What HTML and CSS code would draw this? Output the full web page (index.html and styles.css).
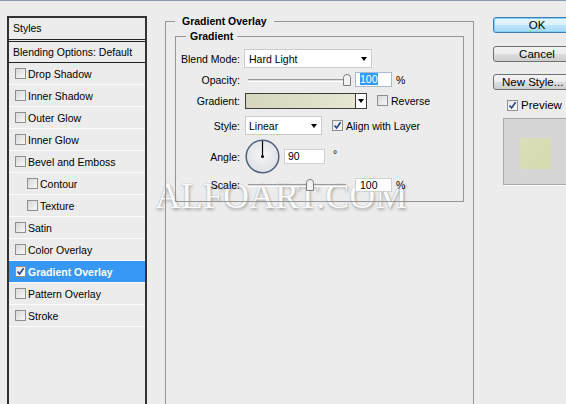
FILE: index.html
```html
<!DOCTYPE html>
<html lang="en">
<head>
<meta charset="utf-8">
<title>Layer Style - Gradient Overlay</title>
<link rel="stylesheet" href="styles.css">
</head>
<body>
<div class="dialog">
  <aside class="styles-panel">
    <div class="panel-head">Styles</div>
    <div class="panel-blend">Blending Options: Default</div>
    <ul class="fx-list">
      <li class="fx"><span class="cb"></span>Drop Shadow</li>
      <li class="fx"><span class="cb"></span>Inner Shadow</li>
      <li class="fx"><span class="cb"></span>Outer Glow</li>
      <li class="fx"><span class="cb"></span>Inner Glow</li>
      <li class="fx"><span class="cb"></span>Bevel and Emboss</li>
      <li class="fx sub"><span class="cb"></span>Contour</li>
      <li class="fx sub"><span class="cb"></span>Texture</li>
      <li class="fx"><span class="cb"></span>Satin</li>
      <li class="fx"><span class="cb"></span>Color Overlay</li>
      <li class="fx active"><span class="cb checked"><svg viewBox="0 0 9 9" width="9" height="9"><path d="M1.5 4.5 L3.6 7 L7.6 1.2" fill="none" stroke="#24428c" stroke-width="1.6"/></svg></span>Gradient Overlay</li>
      <li class="fx"><span class="cb"></span>Pattern Overlay</li>
      <li class="fx"><span class="cb"></span>Stroke</li>
    </ul>
  </aside>

  <main class="settings">
    <fieldset class="group outer">
      <legend>Gradient Overlay</legend>
      <fieldset class="group inner">
        <legend>Gradient</legend>
        <div class="row r-blend">
          <span class="lbl">Blend Mode:</span>
          <div class="select sel-blend"><span>Hard Light</span><i class="arrow"></i></div>
        </div>
        <div class="row r-opacity">
          <span class="lbl">Opacity:</span>
          <div class="slider"><span class="track"></span><svg class="thumb" style="left:95px" viewBox="0 0 8 12" width="8" height="12"><path d="M0.5 11.5 V3.5 Q0.5 0.5 4 0.5 Q7.5 0.5 7.5 3.5 V11.5 Z" fill="#f2f2f2" stroke="#7d7d7d"/></svg></div>
          <span class="num"><span class="hl">100</span></span>
          <span class="pct">%</span>
        </div>
        <div class="row r-gradient">
          <span class="lbl">Gradient:</span>
          <div class="grad"><span class="grad-fill"></span><span class="grad-btn"><i class="arrow"></i></span></div>
          <span class="check"><span class="cb"></span>Reverse</span>
        </div>
        <div class="row r-style">
          <span class="lbl">Style:</span>
          <div class="select sel-style"><span>Linear</span><i class="arrow"></i></div>
          <span class="check"><span class="cb checked"><svg viewBox="0 0 9 9" width="9" height="9"><path d="M1.5 4.5 L3.6 7 L7.6 1.2" fill="none" stroke="#24428c" stroke-width="1.6"/></svg></span>Align with Layer</span>
        </div>
        <div class="row r-angle">
          <span class="lbl">Angle:</span>
          <svg class="dial" viewBox="0 0 35 35" width="35" height="35">
            <defs>
              <radialGradient id="dialfill" cx="50%" cy="45%" r="55%">
                <stop offset="0" stop-color="#f6f6f6"/>
                <stop offset="1" stop-color="#dfe1e6"/>
              </radialGradient>
            </defs>
            <circle cx="17.5" cy="17.5" r="16.3" fill="url(#dialfill)" stroke="#4f5f7e" stroke-width="1.5"/>
            <line x1="17.5" y1="17.5" x2="17.5" y2="2" stroke="#000" stroke-width="1.2"/>
            <circle cx="17.5" cy="17.5" r="1.5" fill="#000"/>
          </svg>
          <span class="num num-angle">90</span>
          <span class="deg">°</span>
        </div>
        <div class="row r-scale">
          <span class="lbl">Scale:</span>
          <div class="slider"><span class="track"></span><svg class="thumb" style="left:58px" viewBox="0 0 8 12" width="8" height="12"><path d="M0.5 11.5 V3.5 Q0.5 0.5 4 0.5 Q7.5 0.5 7.5 3.5 V11.5 Z" fill="#f2f2f2" stroke="#7d7d7d"/></svg></div>
          <span class="num num-scale">100</span>
          <span class="pct">%</span>
        </div>
      </fieldset>
    </fieldset>
  </main>

  <aside class="actions">
    <button class="btn default">OK</button>
    <button class="btn cancel">Cancel</button>
    <button class="btn newstyle">New Style...</button>
    <span class="check preview-check"><span class="cb checked"><svg viewBox="0 0 9 9" width="9" height="9"><path d="M1.5 4.5 L3.6 7 L7.6 1.2" fill="none" stroke="#24428c" stroke-width="1.6"/></svg></span>Preview</span>
    <div class="preview-box"><span class="swatch"></span></div>
  </aside>
</div>
<div class="watermark">ALFOART.COM</div>
</body>
</html>
```

FILE: styles.css
```css
* { box-sizing: border-box; }
html, body { margin: 0; padding: 0; }
body {
  width: 566px;
  height: 404px;
  overflow: hidden;
  position: relative;
  background: #ececec;
  font-family: "Liberation Sans", Arial, sans-serif;
  font-size: 10.5px;
  color: #000;
}
.dialog {
  display: flex;
  align-items: flex-start;
  height: 404px;
  border-top: 1px solid #8b9ab3;
}

/* left styles list */
.styles-panel {
  flex: none;
  width: 140px;
  height: 400px;
  margin: 15px 0 0 7px;
  border: 2px solid #333;
}
.panel-head {
  height: 24px;
  line-height: 21px;
  padding-left: 4px;
  border-bottom: 3px double #222;
}
.panel-blend {
  height: 21px;
  line-height: 20px;
  padding-left: 4px;
  border-bottom: 1px solid #222;
}
.fx-list { list-style: none; margin: 0; padding: 0; }
.fx {
  display: flex;
  align-items: center;
  height: 22px;
  padding-left: 6px;
  border-bottom: 1px solid #fbfbfb;
}
.fx.sub { padding-left: 18px; }
.fx.active { background: #3797f5; color: #fff; font-weight: bold; }
.fx .cb { margin-right: 2px; }

.cb {
  flex: none;
  display: inline-flex;
  align-items: center;
  justify-content: center;
  width: 11px;
  height: 11px;
  border: 1px solid #8e8f8f;
  background: linear-gradient(135deg, #d8d8d8, #f7f7f7);
}
.cb.checked { background: linear-gradient(135deg, #e6e6e6, #ffffff); }

/* center settings */
.settings { flex: none; margin: 14px 0 0 18px; }
.group { margin: 0; min-inline-size: 0; }
.group legend {
  font-weight: bold;
  line-height: 12px;
}
.outer {
  width: 309px;
  height: 420px;
  padding: 0 9px;
  border: 1px solid #959595;
}
.outer > legend { margin-left: 0; padding: 0 7px; }
.inner {
  margin-top: 3px;
  padding: 5px 0;
  border: 1px solid #959595;
}
.inner > legend { margin-left: 10px; padding: 0 4px; }

.row { display: flex; align-items: center; }
.r-blend { height: 23px; }
.r-opacity { height: 19px; }
.r-gradient { height: 23px; }
.r-style { height: 27px; }
.r-angle { height: 35px; }
.r-scale { height: 22px; }
.lbl { flex: none; width: 64px; text-align: right; }

.select {
  flex: none;
  display: flex;
  align-items: center;
  justify-content: space-between;
  height: 19px;
  background: #fff;
  border: 1px solid #cbcbcb;
  padding: 0 4px 0 4px;
}
.sel-blend { width: 128px; margin-left: 4px; }
.sel-style { width: 77px; margin-left: 5px; padding-left: 3px; }
.arrow {
  display: block;
  width: 0;
  height: 0;
  border-left: 3.5px solid transparent;
  border-right: 3.5px solid transparent;
  border-top: 4px solid #000;
}

.slider {
  flex: none;
  position: relative;
  width: 104px;
  height: 12px;
  margin-left: 8px;
}
.slider .track {
  position: absolute;
  left: 0;
  top: 5px;
  width: 98px;
  height: 3px;
  background: #dedede;
  border-top: 1px solid #9b9b9b;
  border-bottom: 1px solid #fff;
}
.slider .thumb { position: absolute; top: 0; }

.num {
  flex: none;
  display: block;
  width: 37px;
  height: 15px;
  margin-left: 3px;
  padding-left: 4px;
  line-height: 13px;
  background: #fff;
  border: 1px solid #a9bbd3;
}
.num .hl { background: #3399ff; color: #fff; }
.num-scale { height: 14px; line-height: 12px; border-color: #d0d0d0; }
.num-angle { width: 41px; margin-left: 4px; padding-left: 3px; border-color: #d0d0d0; }
.pct { margin-left: 4px; }
.deg { align-self: flex-start; margin: 9px 0 0 8px; }

.grad {
  flex: none;
  display: flex;
  width: 122px;
  height: 16px;
  margin-left: 5px;
  border: 1px solid #3d3d3d;
}
.grad-fill { flex: 1; background: linear-gradient(to right, #d5d6bd, #e7e7d1); }
.grad-btn {
  width: 11px;
  display: flex;
  align-items: center;
  justify-content: center;
  background: #fff;
  border-left: 1px solid #3d3d3d;
}
.check { display: flex; align-items: center; margin-left: 10px; }
.check .cb { margin-right: 3px; }
.dial { flex: none; margin-left: 5px; }

/* right column */
.actions {
  flex: none;
  display: flex;
  flex-direction: column;
  align-items: flex-start;
  width: 90px;
  margin: 16px 0 0 19px;
}
.btn {
  display: block;
  width: 88px;
  height: 16px;
  padding: 0;
  font-family: "Liberation Sans", Arial, sans-serif;
  font-size: 11.5px;
  line-height: 14px;
  color: #000;
  text-align: center;
  white-space: nowrap;
  border: 1px solid #707070;
  border-radius: 3px;
  background: linear-gradient(#f3f3f3, #ebebeb 50%, #dddddd 50%, #cfcfcf);
}
.btn.default {
  border-color: #3c7fb1;
  background: linear-gradient(#eaf6fd, #d9f0fc 50%, #bee6fd 50%, #a7d9f5);
  box-shadow: inset 0 0 0 1px #7fd4f5;
}
.btn.cancel { margin-top: 13px; }
.btn.newstyle { margin-top: 12px; text-align: left; padding-left: 8px; }
.preview-check { margin: 9px 0 0 14px; font-size: 11.5px; }
.preview-box {
  width: 70px;
  height: 67px;
  margin: 7px 0 0 10px;
  padding: 19px 0 0 16px;
  background: #d6d6d6;
  border: 1px solid #a9a9a9;
  box-shadow: 1px 1px 0 #fff;
}
.swatch {
  display: block;
  width: 31px;
  height: 31px;
  background: linear-gradient(135deg, #dcdeb8, #d7d9b0);
}

/* watermark, drawn beneath the dialog's controls */
.watermark {
  position: absolute;
  z-index: -1;
  left: 155px;
  top: 178px;
  font-family: "Liberation Serif", "Times New Roman", serif;
  font-size: 36px;
  line-height: 36px;
  color: #fbfbfb;
  text-shadow: 0 0 1px #9a9a9a, 1px 2px 3px rgba(0, 0, 0, 0.3);
  white-space: nowrap;
}
```
